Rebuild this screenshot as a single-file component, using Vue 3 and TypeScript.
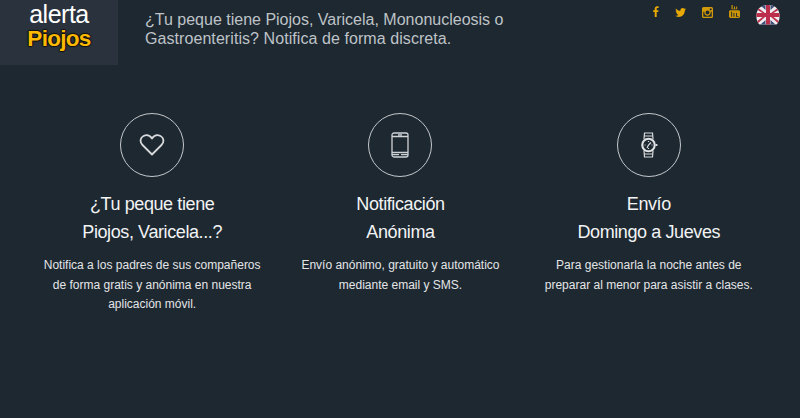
<template>
  <div class="page">
    <header class="top">
      <div class="logo">
        <span class="logo-a">alerta</span>
        <span class="logo-b">Piojos</span>
      </div>
      <p class="tagline">¿Tu peque tiene Piojos, Varicela, Mononucleosis o<br /><span class="second">Gastroenteritis? Notifica de forma discreta.</span></p>
      <div class="social">
        <svg class="i-f" width="6" height="11" viewBox="0 0 7 12" preserveAspectRatio="none"><path fill="#e8a905" d="M2 12V6.600H.2V4.600H2V3C2 1.200 3.100.2 4.700.2c.8 0 1.500.1 1.800.1V2.200H5.300c-.9 0-1 .4-1 1v1.400h2.100L6.100 6.600H4.300V12z"/></svg>
        <svg class="i-t" width="11" height="9" viewBox="0 0 12 10"><path fill="#e8a905" d="M12 1.200c-.4.2-.9.3-1.400.4.500-.3.900-.8 1.100-1.400-.5.3-1 .5-1.600.6C9.700.300 9 0 8.300 0 6.900 0 5.900 1.100 5.900 2.500c0 .2 0 .4.100.6C4 3 2.200 2 1 .5.800.9.700 1.300.700 1.700c0 .9.400 1.600 1.100 2-.4 0-.8-.1-1.100-.3 0 1.200.8 2.200 2 2.400-.4.100-.7.100-1.100 0 .3 1 1.200 1.700 2.300 1.700C3 8.400 1.500 8.900 0 8.700 1.100 9.500 2.400 10 3.800 10c4.500 0 7.100-3.800 7-7.200.5-.4.900-.9 1.200-1.600z"/></svg>
        <svg class="i-g" width="11" height="11" viewBox="0 0 11 11"><path fill="#d29a08" fill-rule="evenodd" d="M1.500 0h8A1.500 1.500 0 0 1 11 1.500v8A1.500 1.500 0 0 1 9.500 11h-8A1.500 1.500 0 0 1 0 9.500v-8A1.500 1.500 0 0 1 1.500 0zM7.800 1.400v1.800h1.800V1.400zM1.300 4.700v4.400c0 .3.200.6.600.6h7.200c.4 0 .6-.3.600-.6V4.700H8.600a3.200 3.200 0 1 1-6.200 0zM5.500 3.500a2 2 0 1 0 0 4 2 2 0 0 0 0-4z"/></svg>
        <svg class="i-y" width="11" height="13" viewBox="0 0 11 13"><path fill="#c99408" fill-rule="evenodd" d="M2.500 0h1.200v3.800H5V1.500h1V3.800h1.200V1.500h1V4.300H2.500zM1.400 5.300h8.200c.8 0 1.400.6 1.400 1.400v4.900c0 .8-.6 1.400-1.400 1.400H1.400C.6 13 0 12.400 0 11.600V6.700C0 5.900.6 5.300 1.400 5.300zM2.200 6.800v5h.9v-5zM4.500 8v3.800h.9V8zM7 8v3.800h2.500v-.9H7.900V8z"/></svg>
        <svg class="flag" width="24" height="20" viewBox="0 0 24 20">
          <defs><clipPath id="fc"><path d="M12 0C18 0 23 3 23.500 9.500C24 14 22.500 18 20.500 19.500H3.500C1.500 18 0 14 .5 9.500C1 3 6 0 12 0z"/></clipPath></defs>
          <g clip-path="url(#fc)">
            <rect width="24" height="20" fill="#f1eef0"/>
            <path d="M1 2 9 8H6.500L0 4zM23 2 15 8h2.500L24 4zM0 17 6.500 12H9L1 19zM24 17 17.500 12H15L23 19z" fill="#bb3350"/>
            <path d="M4 0 9.500 5V0zM20 0 14.500 5V0zM4 20 9.500 15V20zM20 20 14.500 15V20z" fill="#41507a"/>
            <rect x="10" width="4" height="20" fill="#bb2f4d"/>
            <rect y="8" width="24" height="4" fill="#bb2f4d"/>
          </g>
        </svg>
      </div>
    </header>
    <section class="features">
      <article v-for="f in features" :key="f.body" class="feature">
        <div class="circle">
          <svg v-if="f.icon === 'heart'" width="26" height="24" viewBox="0 0 26 24" fill="none" stroke="#d8dadc" stroke-width="1.800" stroke-linejoin="round"><path d="M13 21.500 3.500 12C.5 9 1.200 4.600 4.500 3 7.500 1.600 11 2.500 13 5.500 15 2.500 18.500 1.600 21.500 3 24.800 4.600 25.500 9 22.500 12z"/></svg>
          <svg v-else-if="f.icon === 'phone'" width="18" height="26" viewBox="0 0 18 26" fill="none" stroke="#d0d3d5" stroke-width="1.300"><rect x="1" y="1" width="16" height="24" rx="2"/><path d="M1 4.500H17M1 20.500H17M1 22.700H8M10 22.700H17M7 2.800H11"/></svg>
          <svg v-else width="18" height="26" viewBox="0 0 18 26" fill="none" stroke="#d8dadc" stroke-width="1.200"><path d="M4 7 4.500 1H12.500L13 7M4.500 4H12.500M4 19 4.500 25H12.500L13 19M4.500 22H12.500"/><circle cx="8.500" cy="13" r="7.300" fill="#e0e2e4" stroke="none"/><circle cx="8.500" cy="13" r="5.200" fill="#1d2831" stroke="none"/><path d="M8.500 13 11 10.500M8.500 13 7 16M8.500 9V10M8.500 16V17M4.500 13H5.500M11.500 13H12.500" stroke-width="1.200"/><path d="M16.500 12v2" stroke-width="1.800"/></svg>
        </div>
        <h2>{{ f.l1 }}<br />{{ f.l2 }}</h2>
        <p>
          <template v-for="(line, i) in f.lines" :key="i">{{ line }}<br /></template>
        </p>
      </article>
    </section>
  </div>
</template>

<script setup lang="ts">
interface Feature { icon: string; l1: string; l2: string; body: string; lines: string[] }
const features: Feature[] = [
  { icon: 'heart', l1: '¿Tu peque tiene', l2: 'Piojos, Varicela...?', body: 'a', lines: ['Notifica a los padres de sus compañeros', 'de forma gratis y anónima en nuestra', 'aplicación móvil.'] },
  { icon: 'phone', l1: 'Notificación', l2: 'Anónima', body: 'b', lines: ['Envío anónimo, gratuito y automático', 'mediante email y SMS.'] },
  { icon: 'watch', l1: 'Envío', l2: 'Domingo a Jueves', body: 'c', lines: ['Para gestionarla la noche antes de', 'preparar al menor para asistir a clases.'] },
]
</script>

<style>
html, body { margin: 0; background: #1d2831; }
</style>

<style scoped>
.page {
  width: 800px;
  height: 418px;
  overflow: hidden;
  background: #1d2831;
  font-family: "Liberation Sans", Arial, sans-serif;
  color: #fff;
}
.top {
  display: flex;
  height: 65px;
}
.logo {
  width: 118px;
  height: 65px;
  background: #2a333d;
  display: flex;
  flex-direction: column;
  align-items: center;
  flex: none;
}
.logo-a {
  font-size: 25px;
  line-height: 24px;
  letter-spacing: -0.5px;
  margin-top: 2px;
  color: #fff;
}
.logo-b {
  font-size: 22.500px;
  font-weight: 700;
  line-height: 24px;
  letter-spacing: -0.7px;
  margin-top: 1px;
  color: #fdb900;
  text-shadow: 1px 0 1px #111, -1px 0 1px #111, 0 1px 1px #111, 0 -1px 1px #111;
}
.tagline {
  margin: 11px 0 0 27px;
  font-size: 16px;
  line-height: 18.500px;
  font-weight: 400;
  color: #bfc3c7;
  flex: 1;
}
.second { letter-spacing: 0.07px; }
.social {
  display: flex;
  align-items: flex-start;
  gap: 16px;
  padding: 5px 20px 0 0;
}
.i-f { margin-top: 1px; }
.i-t { margin-top: 3px; }
.i-g { margin-top: 2px; }
.features {
  display: flex;
  padding: 48px 27px 0 28px;
}
.feature {
  flex: 1;
  display: flex;
  flex-direction: column;
  align-items: center;
  text-align: center;
}
.circle {
  width: 62px;
  height: 62px;
  border: 1px solid #c5c8cb;
  border-radius: 50%;
  display: flex;
  align-items: center;
  justify-content: center;
}
.feature h2 {
  margin: 13px 0 0;
  font-size: 18px;
  line-height: 28px;
  font-weight: 400;
  letter-spacing: -0.4px;
  color: #f2f3f4;
}
.feature p {
  margin: 10px 0 0;
  font-size: 12px;
  line-height: 19.500px;
  color: #e4e5e7;
}
</style>
